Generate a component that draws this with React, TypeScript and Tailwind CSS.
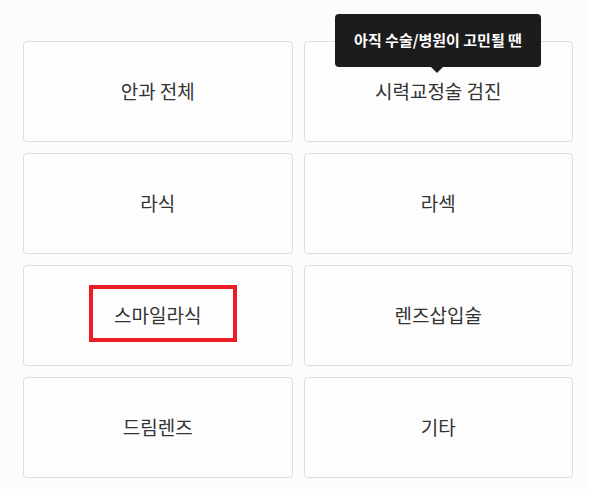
import React from 'react';

const items = ['안과 전체', '시력교정술 검진', '라식', '라섹', '스마일라식', '렌즈삽입술', '드림렌즈', '기타'];

const App = () => {
  return (
    <div
      className="relative w-[589px] h-[489px] bg-[#fcfcfc] pt-[41px] pl-[23px] pr-[16px] overflow-hidden"
      style={{ fontFamily: '"Noto Sans CJK KR", "Noto Sans", sans-serif' }}
    >
      <div className="grid grid-cols-2 gap-[11px]">
        {items.map((label) => (
          <div
            key={label}
            className="h-[101px] flex items-center justify-center rounded-[4px] border border-[#dedede] bg-[#fdfdfd] text-[19px] text-[#333]"
          >
            {label}
          </div>
        ))}
      </div>

      {/* tooltip over the second card */}
      <div className="absolute left-[335px] top-[14px] w-[206px] h-[53px] rounded-[4px] bg-[#1c1c1c] flex items-center justify-center text-white text-[15px] font-bold">
        아직 수술/병원이 고민될 땐
        <div className="absolute left-[96px] -bottom-[6px] w-0 h-0 border-l-[6px] border-r-[6px] border-t-[6px] border-l-transparent border-r-transparent border-t-[#1c1c1c]" />
      </div>

      {/* highlight box */}
      <div className="absolute left-[89px] top-[285px] w-[148px] h-[57px] border-[4px] border-[#ec1c24]" />
    </div>
  );
};

export default App;
